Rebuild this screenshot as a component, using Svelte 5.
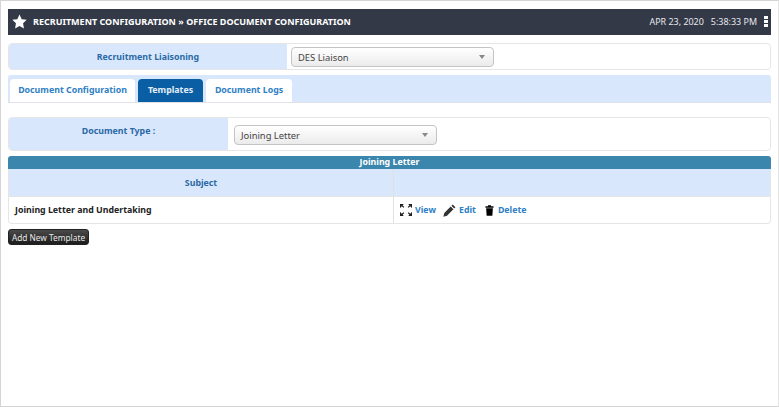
<script>
	const tabs = [
		{ label: 'Document Configuration', width: 125 },
		{ label: 'Templates', width: 65, active: true },
		{ label: 'Document Logs', width: 86 }
	];
</script>

<div class="page">
	<header class="title-bar">
		<svg class="star" viewBox="0 0 24 24" width="15" height="15"><path d="M12 .8l3.500 7.400 8 1.100-5.800 5.600 1.400 8.100L12 19.100 4.900 23l1.400-8.100L.5 9.300l8-1.100z" fill="#fff" /></svg>
		<h1>RECRUITMENT CONFIGURATION » OFFICE DOCUMENT CONFIGURATION</h1>
		<span class="clock">APR 23, 2020 &nbsp; 5:38:33 PM</span>
		<span class="dots"><i></i><i></i><i></i></span>
	</header>

	<div class="form-row first">
		<div class="label label-wide">Recruitment Liaisoning</div>
		<div class="field">
			<div class="select">DES Liaison<span class="caret"></span></div>
		</div>
	</div>

	<nav class="tabs">
		{#each tabs as tab}
			<a class="tab" class:active={tab.active} style:width={tab.width + 'px'}>{tab.label}</a>
		{/each}
	</nav>

	<div class="form-row second">
		<div class="label label-narrow">Document Type :</div>
		<div class="field">
			<div class="select">Joining Letter<span class="caret"></span></div>
		</div>
	</div>

	<div class="caption">Joining Letter</div>
	<div class="table">
		<div class="head">
			<div class="col-subject">Subject</div>
			<div class="col-actions"></div>
		</div>
		<div class="row">
			<div class="col-subject">Joining Letter and Undertaking</div>
			<div class="col-actions">
				<svg viewBox="0 0 14 14" width="12" height="12" fill="#222"><path d="M0 0h4.500L3 1.500l2 2-1 1-2-2L.6 4.500H0zM14 0v4.500h-.6L12 2.500l-2 2-1-1 2-2L9.500 0zM0 14V9.500h.6L2 11.500l2-2 1 1-2 2 1.500 1.500zM14 14H9.500l1.500-1.500-2-2 1-1 2 2 1.400-2h.6z" /></svg>
				<a class="view">View</a>
				<svg viewBox="0 0 14 14" width="13" height="13" fill="#333"><path d="M10.500 .6l2.900 2.900-1.400 1.400-2.900-2.900zM8.300 2.800l2.900 2.900-6.900 6.900L.4 13.600l1-3.900z" /></svg>
				<a class="edit">Edit</a>
				<svg viewBox="0 0 12 14" width="9" height="13" fill="#000"><path d="M4 0h4v1.200h3.400v2H.6v-2H4zM1.500 4h9l-.7 10H2.200z" /></svg>
				<a class="delete">Delete</a>
			</div>
		</div>
	</div>

	<button class="add">Add New Template</button>
</div>

<style>
	:global(body) {
		background: #fff;
	}

	.page {
		box-sizing: border-box;
		width: 779px;
		height: 407px;
		padding: 8px 7px 0 7px;
		border: 1px solid #d4d4d4;
		border-right-color: #e4e4e4;
		font-family: "Noto Sans", sans-serif;
		font-size: 8.800px;
		color: #444;
	}

	.title-bar {
		display: flex;
		align-items: center;
		height: 26px;
		box-sizing: border-box;
		padding: 0 3px 2px 4px;
		background: #333946;
		color: #fff;
	}

	.star {
		flex: none;
	}

	h1 {
		margin: 0 0 0 6px;
		flex: 1;
		font-size: 9px;
		font-weight: 700;
		white-space: nowrap;
	}

	.clock {
		font-size: 8.950px;
		color: #e8e8ee;
		white-space: nowrap;
	}

	.dots {
		display: flex;
		flex-direction: column;
		gap: 1px;
		margin: 0 0 0 7px;
	}

	.dots i {
		width: 4px;
		height: 3px;
		background: #fff;
	}

	.form-row {
		display: flex;
		box-sizing: border-box;
		border: 1px solid #e6e6e6;
		border-radius: 4px;
		overflow: hidden;
	}

	.first {
		height: 27px;
		margin-top: 8px;
	}

	.second {
		height: 34px;
		margin-top: 14px;
	}

	.label {
		flex: none;
		background: #d9e7fc;
		color: #2a6aa6;
		font-weight: 700;
		text-align: center;
	}

	.label-wide {
		width: 278px;
		line-height: 26px;
		border-right: 1px solid #fff;
	}

	.label-narrow {
		width: 219px;
		line-height: 27px;
	}

	.field {
		flex: 1;
		display: flex;
		align-items: center;
	}

	.first .field {
		padding-left: 3px;
	}

	.second .field {
		padding-left: 6px;
		padding-top: 1px;
	}

	.select {
		box-sizing: border-box;
		position: relative;
		width: 203px;
		height: 20px;
		padding-left: 6px;
		font-size: 9.400px;
		line-height: 19px;
		border: 1px solid #c4c4c4;
		border-radius: 4px;
		background: linear-gradient(#fff, #ebebeb);
		color: #444;
	}

	.caret {
		position: absolute;
		right: 8px;
		top: 7px;
		border: 3px solid transparent;
		border-top: 4px solid #888;
		border-bottom: 0;
	}

	.tabs {
		display: flex;
		align-items: flex-end;
		gap: 3px;
		box-sizing: border-box;
		height: 28px;
		margin-top: 5px;
		padding-left: 2px;
		background: #d9e7fc;
		border-bottom: 1px solid #dfe3e8;
		border-radius: 3px 3px 0 0;
	}

	.tab {
		box-sizing: border-box;
		height: 23px;
		line-height: 23px;
		text-align: center;
		background: #fff;
		color: #2f80c4;
		font-weight: 700;
		border-radius: 4px 4px 0 0;
		white-space: nowrap;
	}

	.tab.active {
		background: #0a5fa4;
		color: #e4eef8;
	}

	.caption {
		height: 13px;
		margin-top: 5px;
		line-height: 13px;
		background: #3b86ac;
		border-radius: 3px 3px 0 0;
		color: #fff;
		font-weight: 700;
		text-align: center;
	}

	.table {
		box-sizing: border-box;
		border: 1px solid #e6e6e6;
		border-top: 0;
		border-radius: 0 0 4px 4px;
		overflow: hidden;
	}

	.head,
	.row {
		display: flex;
	}

	.head {
		height: 28px;
		background: #d9e7fc;
		color: #2a6aa6;
		font-weight: 700;
		line-height: 28px;
		text-align: center;
		border-bottom: 1px solid #e6e6e6;
		box-sizing: border-box;
	}

	.row {
		height: 26px;
		align-items: stretch;
		color: #222;
		font-weight: 700;
	}

	.col-subject {
		flex: none;
		box-sizing: border-box;
		width: 385px;
		border-right: 1px solid #e0e0e0;
	}

	.row .col-subject {
		padding-left: 6px;
		line-height: 26px;
	}

	.col-actions {
		flex: 1;
	}

	.row .col-actions {
		display: flex;
		align-items: center;
		padding-left: 6px;
	}

	.col-actions a {
		color: #2f80c4;
	}

	.view {
		margin: 0 7px 0 3px;
	}

	.edit {
		margin: 0 9px 0 3px;
	}

	.delete {
		margin-left: 4px;
	}

	.add {
		display: block;
		box-sizing: border-box;
		width: 81px;
		height: 16px;
		margin-top: 5px;
		padding: 0;
		border: 1px solid #222;
		border-radius: 3px;
		background: linear-gradient(#4a4a4a, #1c1c1c);
		color: #e8e8e8;
		font-family: inherit;
		font-size: 8.300px;
		white-space: nowrap;
	}
</style>
